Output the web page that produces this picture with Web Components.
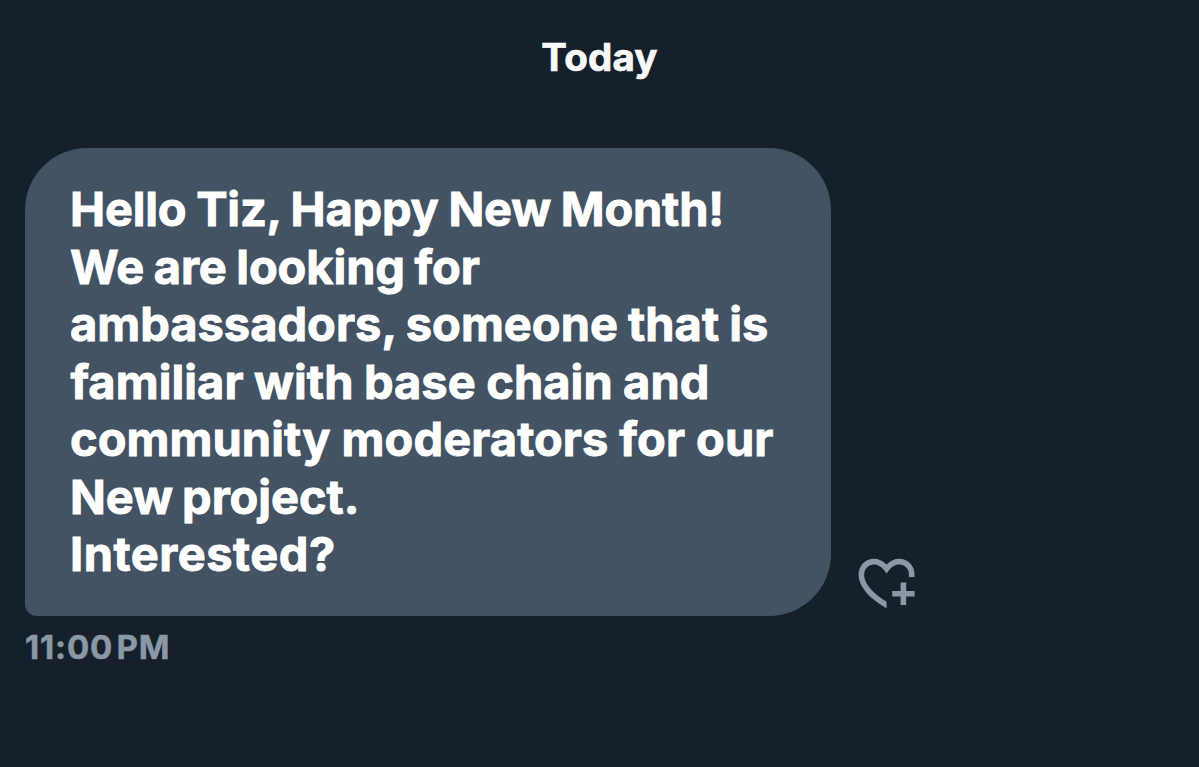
<!DOCTYPE html>
<html lang="en">
<head>
<meta charset="utf-8">
<title>Messages</title>
<style>
    body{
        margin: 0;
        background: #16202a;
        font-family: Inter, "Liberation Sans", sans-serif;
    }
</style>
</head>
<body>
<chat-thread>
    <day-label slot="day">Today</day-label>
    <chat-message>
        <message-line style="--track: -0.22px; --gap: -1px">Hello Tiz, Happy New Month!</message-line>
        <message-line style="--track: -0.1px; --gap: -1.5px">We are looking for</message-line>
        <message-line style="--track: 0px; --gap: -1px">ambassadors, someone that is</message-line>
        <message-line style="--track: 0.06px; --gap: -0.8px; --indent: 0.5px">familiar with base chain and</message-line>
        <message-line style="--track: 0.07px; --gap: -0.3px">community moderators for our</message-line>
        <message-line style="--track: -0.05px; --gap: -2px">New project.</message-line>
        <message-line style="--track: 0.5px">Interested?</message-line>
        <reaction-button slot="action"></reaction-button>
        <span slot="time">11:00 PM</span>
    </chat-message>
</chat-thread>

<script>
class ChatThread extends HTMLElement{
    constructor(){
        super();
        this.attachShadow({mode: "open"});
        this.shadowRoot.innerHTML = `
        <style>
            :host{
                display: flex;
                flex-direction: column;
                box-sizing: border-box;
                height: 767px;
                padding: 27px 25px 0;
                overflow: hidden;
            }
            .messages{
                padding-top: 61px;
            }
        </style>
        <slot name="day"></slot>
        <div class="messages">
            <slot></slot>
        </div>
        `;
    }
}

class DayLabel extends HTMLElement{
    constructor(){
        super();
        this.attachShadow({mode: "open"});
        this.shadowRoot.innerHTML = `
        <style>
            :host{
                display: block;
                text-align: center;
                color: #f7f9f9;
                font-size: 38.5px;
                font-weight: 700;
                line-height: 60px;
                letter-spacing: 0.2px;
                -webkit-text-stroke: 0.7px currentColor;
            }
        </style>
        <slot></slot>
        `;
    }
}

class ChatMessage extends HTMLElement{
    constructor(){
        super();
        this.attachShadow({mode: "open"});
        this.shadowRoot.innerHTML = `
        <style>
            :host{
                display: block;
            }
            .row{
                display: flex;
                align-items: flex-end;
                gap: 22px;
            }
            .bubble{
                box-sizing: border-box;
                width: 806px;
                height: 468px;
                padding: 32px 45px;
                border-radius: 62px 62px 62px 12px;
                background: #435363;
                color: #fff;
            }
            .time{
                padding-top: 11px;
                color: #8b98a5;
                font-size: 33px;
                font-weight: 700;
                line-height: 40px;
                letter-spacing: 0.8px;
                word-spacing: -5px;
                -webkit-text-stroke: 0.5px currentColor;
            }
        </style>
        <div class="row">
            <div class="bubble">
                <slot></slot>
            </div>
            <slot name="action"></slot>
        </div>
        <div class="time">
            <slot name="time"></slot>
        </div>
        `;
    }
}

class MessageLine extends HTMLElement{
    constructor(){
        super();
        this.attachShadow({mode: "open"});
        this.shadowRoot.innerHTML = `
        <style>
            :host{
                display: block;
                font-size: 47px;
                font-weight: 700;
                line-height: 57.5px;
                letter-spacing: var(--track, 0);
                word-spacing: var(--gap, 0);
                text-indent: var(--indent, 0);
                white-space: nowrap;
                -webkit-text-stroke: 0.9px currentColor;
            }
        </style>
        <slot></slot>
        `;
    }
}

class ReactionButton extends HTMLElement{
    constructor(){
        super();
        this.attachShadow({mode: "open"});
        this.shadowRoot.innerHTML = `
        <style>
            :host{
                display: block;
                color: #8b98a5;
            }
            svg{
                display: block;
                width: 67.2px;
                height: 67.2px;
            }
        </style>
        <svg viewBox="0 0 24 24" fill="currentColor">
            <path d="M17 12v3h-2.998v2h3v3h2v-3h3v-2h-3.001v-3H17zm-5 6.839c-3.871-2.34-6.053-4.639-7.127-6.609-1.112-2.04-1.031-3.7-.479-4.82.561-1.13 1.667-1.84 2.91-1.91 1.222-.06 2.68.51 3.892 2.16l.806 1.09.805-1.09c1.211-1.65 2.668-2.22 3.89-2.16 1.242.07 2.347.78 2.908 1.91.334.677.49 1.554.321 2.59h2.011c.153-1.283-.039-2.469-.539-3.48-.887-1.79-2.647-2.91-4.601-3.01-1.65-.09-3.367.56-4.796 2.01-1.43-1.45-3.147-2.1-4.798-2.01-1.954.1-3.714 1.22-4.601 3.01-.896 1.81-.846 4.17.514 6.67 1.353 2.48 4.003 5.12 8.382 7.67l.502.299v-2.32z"/>
        </svg>
        `;
    }
}

customElements.define("chat-thread", ChatThread);
customElements.define("day-label", DayLabel);
customElements.define("chat-message", ChatMessage);
customElements.define("message-line", MessageLine);
customElements.define("reaction-button", ReactionButton);
</script>
</body>
</html>
